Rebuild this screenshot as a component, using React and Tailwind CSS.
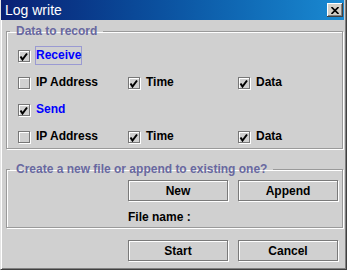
import React from "react";

const Box = ({ checked }) => (
    <span className="flex h-[12px] w-[12px] shrink-0 items-center justify-center border border-[#777777] bg-[#d0d0d0] shadow-[inset_1px_1px_0_#ffffff,1px_1px_0_#ffffff]">
        {checked && (
            <svg width="10" height="10" viewBox="0 0 10 10">
                <path d="M1.5 5.5 L3.5 8.5 L8 2.5" stroke="#000" strokeWidth="2" fill="none" />
            </svg>
        )}
    </span>
);

const Check = ({ label, checked, blue, focus }) => (
    <label className="flex h-[19px] items-center gap-[5px]">
        <Box checked={checked} />
        <span
            className={`border px-0 text-[12px] leading-[17px] font-bold ${blue ? "text-[#0000ff]" : "text-black"} ${focus ? "border-[#9a9ad2]" : "border-transparent"}`}
        >
            {label}
        </span>
    </label>
);

const Button = ({ children }) => (
    <button className="h-[21px] w-[100px] shrink-0 border border-[#7a7a7a] bg-[#d0d0d0] text-[12px] font-bold text-black shadow-[inset_1px_1px_0_#ffffff,1px_1px_0_#ffffff]">
        {children}
    </button>
);

const Legend = ({ children }) => (
    <legend className="ml-[3px] px-[6px] text-[12px] leading-[14px] font-bold text-[#6868a0]">
        {children}
    </legend>
);

export default function App() {
    return (
        <div className="flex h-[270px] w-[347px] flex-col overflow-hidden border-b border-l border-r border-b-[#404040] border-l-[#e4e4e4] border-r-[#404040] bg-[#d0d0d0] font-['Liberation_Sans',Arial,sans-serif] shadow-[inset_1px_0_0_#ffffff,inset_-1px_-1px_0_#808080]">
            {/* Title bar */}
            <div className="mr-[2px] flex h-[20px] shrink-0 items-center justify-between bg-linear-to-r from-[#0a1f74] to-[#1a8ad2] pl-[4px] pr-[1px]">
                <span className="text-[14px] leading-[16px] text-white">Log write</span>
                <span className="flex h-[14px] w-[16px] items-center justify-center bg-[#d4d0c8] shadow-[inset_-1px_-1px_0_#404040,inset_1px_1px_0_#ffffff,inset_-2px_-2px_0_#808080]">
                    <svg width="8" height="7" viewBox="0 0 8 7">
                        <path d="M0.5 0 L7.5 7 M7.5 0 L0.5 7" stroke="#000" strokeWidth="1.6" />
                    </svg>
                </span>
            </div>

            {/* Data to record */}
            <fieldset className="ml-[5px] mt-[4px] w-[337px] shrink-0 border border-[#9a9a9a] pb-[2px] shadow-[inset_1px_1px_0_#ffffff,1px_1px_0_#ffffff]">
                <Legend>Data to record</Legend>
                <div className="grid grid-cols-[110px_110px_1fr] gap-y-[8px] pl-[11px] pt-[8px]">
                    <div className="col-span-3">
                        <Check label="Receive" checked blue focus />
                    </div>
                    <Check label="IP Address" />
                    <Check label="Time" checked />
                    <Check label="Data" checked />
                    <div className="col-span-3">
                        <Check label="Send" checked blue />
                    </div>
                    <Check label="IP Address" />
                    <Check label="Time" checked />
                    <Check label="Data" checked />
                </div>
            </fieldset>

            {/* File mode */}
            <fieldset className="ml-[5px] mt-[13px] w-[337px] shrink-0 border border-[#9a9a9a] pb-[3px] shadow-[inset_1px_1px_0_#ffffff,1px_1px_0_#ffffff]">
                <Legend>Create a new file or append to existing one?</Legend>
                <div className="flex gap-[10px] pl-[121px] pt-[4px]">
                    <Button>New</Button>
                    <Button>Append</Button>
                </div>
                <div className="mt-[9px] pl-[121px] text-[12px] leading-[14px] font-bold text-black">
                    File name :
                </div>
            </fieldset>

            <div className="mt-[12px] flex shrink-0 justify-end gap-[10px] pr-[8px]">
                <Button>Start</Button>
                <Button>Cancel</Button>
            </div>
        </div>
    );
}
